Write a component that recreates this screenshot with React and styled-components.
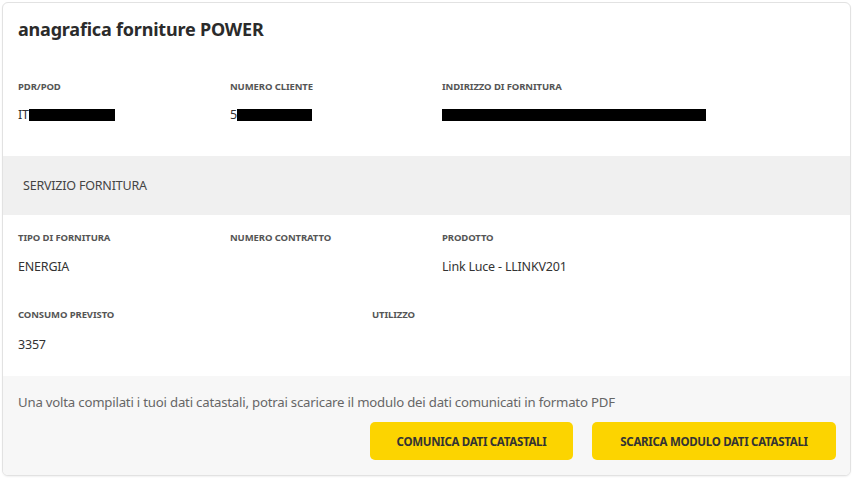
import React from 'react';
import styled, { createGlobalStyle } from 'styled-components';

const GlobalStyle = createGlobalStyle`
  body {
    margin: 0;
    background: #ffffff;
    font-family: 'Noto Sans', 'Open Sans', sans-serif;
  }
`;

const Page = styled.div`
  padding: 2px;
  width: 853px;
  box-sizing: border-box;
`;

const Card = styled.div`
  border: 1px solid #e2e2e2;
  border-radius: 6px;
  overflow: hidden;
  background: #fff;
  box-shadow: 0 1px 2px rgba(0, 0, 0, 0.06);
`;

const Title = styled.h2`
  margin: 0;
  padding: 14px 15px 0;
  font-size: 18px;
  line-height: 24px;
  font-weight: 700;
  color: #2b2b2b;
  letter-spacing: -0.2px;
`;

const Section = styled.div`
  padding: 0 15px;
`;

const Row = styled.div`
  display: flex;
  padding-top: ${(props) => props.top || 0}px;
`;

const Field = styled.div`
  width: ${(props) => props.width}px;
  flex-shrink: 0;
`;

const Label = styled.div`
  font-size: 9.5px;
  font-weight: 700;
  color: #555;
  text-transform: uppercase;
  line-height: 12px;
  letter-spacing: -0.1px;
`;

const Value = styled.div`
  margin-top: ${(props) => props.gap || 14}px;
  font-size: 12.5px;
  color: #333;
  line-height: 16px;
  height: 16px;
  display: flex;
  align-items: center;
  letter-spacing: -0.2px;
`;

const Redacted = styled.span`
  display: inline-block;
  background: #000;
  width: ${(props) => props.w}px;
  height: 12px;
`;

const Band = styled.div`
  background: #f0f0f0;
  height: 59px;
  margin-top: 33px;
  display: flex;
  align-items: center;
  padding-left: 20px;
  font-size: 12.5px;
  color: #444;
  letter-spacing: -0.2px;
`;

const Footer = styled.div`
  background: #f7f7f7;
  margin-top: 23px;
  padding: 17px 14px 15px 15px;
`;

const Note = styled.p`
  margin: 0;
  font-size: 13.2px;
  color: #666;
  line-height: 18px;
  letter-spacing: -0.2px;
`;

const Actions = styled.div`
  display: flex;
  justify-content: flex-end;
  gap: 19px;
  margin-top: 11px;
`;

const Button = styled.button`
  width: ${(props) => props.width}px;
  height: 38px;
  border: none;
  border-radius: 5px;
  background: #fcd400;
  font-family: inherit;
  font-size: 11.5px;
  font-weight: 700;
  color: #333;
  letter-spacing: -0.3px;
  cursor: pointer;
`;

export default function App() {
  return (
    <>
      <GlobalStyle />
      <Page>
        <Card>
          <Title>anagrafica forniture POWER</Title>
          <Section>
            <Row top={40}>
              <Field width={212}>
                <Label>PDR/POD</Label>
                <Value>
                  IT<Redacted w={86} />
                </Value>
              </Field>
              <Field width={212}>
                <Label>Numero cliente</Label>
                <Value>
                  5<Redacted w={75} />
                </Value>
              </Field>
              <Field width={300}>
                <Label>Indirizzo di fornitura</Label>
                <Value>
                  <Redacted w={264} />
                </Value>
              </Field>
            </Row>
          </Section>
          <Band>SERVIZIO FORNITURA</Band>
          <Section>
            <Row top={17}>
              <Field width={212}>
                <Label>Tipo di fornitura</Label>
                <Value gap={15}>ENERGIA</Value>
              </Field>
              <Field width={212}>
                <Label>Numero contratto</Label>
                <Value gap={15} />
              </Field>
              <Field width={300}>
                <Label>Prodotto</Label>
                <Value gap={15}>Link Luce - LLINKV201</Value>
              </Field>
            </Row>
            <Row top={34}>
              <Field width={354}>
                <Label>Consumo previsto</Label>
                <Value gap={16}>3357</Value>
              </Field>
              <Field width={300}>
                <Label>Utilizzo</Label>
                <Value gap={16} />
              </Field>
            </Row>
          </Section>
          <Footer>
            <Note>
              Una volta compilati i tuoi dati catastali, potrai scaricare il
              modulo dei dati comunicati in formato PDF
            </Note>
            <Actions>
              <Button width={203}>COMUNICA DATI CATASTALI</Button>
              <Button width={244}>SCARICA MODULO DATI CATASTALI</Button>
            </Actions>
          </Footer>
        </Card>
      </Page>
    </>
  );
}
